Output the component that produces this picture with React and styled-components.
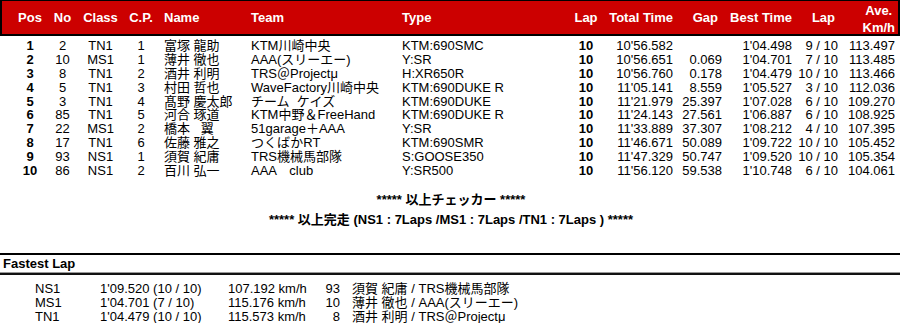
import React from 'react';
import styled, {createGlobalStyle} from 'styled-components';

const GlobalStyle = createGlobalStyle`
	html, body {
		margin: 0;
		padding: 0;
		background: #fff;
	}
	body {
		font-family: "Liberation Sans", Arial, "Noto Sans CJK JP", sans-serif;
		font-size: 13px;
		color: #000;
	}
`;

const COLS = '48px 29px 47px 34px 93px 151px 168px 32px 71px 49px 70px 46px 57px';

const results = [
	['1', '2', 'TN1', '1', '富塚 龍助', 'KTM川崎中央', 'KTM:690SMC', '10', "10'56.582", '', "1'04.498", '9 / 10', '113.497'],
	['2', '10', 'MS1', '1', '薄井 徹也', 'AAA(スリーエー)', 'Y:SR', '10', "10'56.651", '0.069', "1'04.701", '7 / 10', '113.485'],
	['3', '8', 'TN1', '2', '酒井 利明', 'TRS＠Projectμ', 'H:XR650R', '10', "10'56.760", '0.178', "1'04.479", '10 / 10', '113.466'],
	['4', '5', 'TN1', '3', '村田 哲也', 'WaveFactory川崎中央', 'KTM:690DUKE R', '10', "11'05.141", '8.559', "1'05.527", '3 / 10', '112.036'],
	['5', '3', 'TN1', '4', '髙野 慶太郎', 'チーム  ケイズ', 'KTM:690DUKE', '10', "11'21.979", '25.397', "1'07.028", '6 / 10', '109.270'],
	['6', '85', 'TN1', '5', '河合 琢道', 'KTM中野＆FreeHand', 'KTM:690DUKE R', '10', "11'24.143", '27.561', "1'06.887", '6 / 10', '108.925'],
	['7', '22', 'MS1', '2', '橋本   翼', '51garage＋AAA', 'Y:SR', '10', "11'33.889", '37.307', "1'08.212", '4 / 10', '107.395'],
	['8', '17', 'TN1', '6', '佐藤 雅之', 'つくばかRT', 'KTM:690SMR', '10', "11'46.671", '50.089', "1'09.722", '10 / 10', '105.452'],
	['9', '93', 'NS1', '1', '須賀 紀庸', 'TRS機械馬部隊', 'S:GOOSE350', '10', "11'47.329", '50.747', "1'09.520", '10 / 10', '105.354'],
	['10', '86', 'NS1', '2', '百川 弘一', 'AAA　club', 'Y:SR500', '10', "11'56.120", '59.538', "1'10.748", '6 / 10', '104.061'],
];

const fastest = [
	['NS1', "1'09.520 (10 / 10)", '107.192 km/h', '93', '須賀 紀庸', 'TRS機械馬部隊'],
	['MS1', "1'04.701 (7 / 10)", '115.176 km/h', '10', '薄井 徹也', 'AAA(スリーエー)'],
	['TN1', "1'04.479 (10 / 10)", '115.573 km/h', '8', '酒井 利明', 'TRS＠Projectμ'],
];

// how each result column lines up: [align, padLeft, padRight, bold]
const colSpec = [
	['center', 12, 0, true],
	['center', 0, 0],
	['center', 0, 0],
	['center', 0, 0],
	['left', 6, 0],
	['left', 0, 0],
	['left', 0, 0],
	['center', 0, 0, true],
	['right', 0, 0],
	['right', 0, 0],
	['right', 0, 0],
	['right', 0, 0],
	['right', 0, 0],
];

export default function App() {
	return (
		<Page>
			<GlobalStyle/>
			<HeaderBar>
				<HeadCell $align="center" $pl={12}>Pos</HeadCell>
				<HeadCell $align="center">No</HeadCell>
				<HeadCell $align="center">Class</HeadCell>
				<HeadCell $align="center">C.P.</HeadCell>
				<HeadCell $pl={6}>Name</HeadCell>
				<HeadCell>Team</HeadCell>
				<HeadCell>Type</HeadCell>
				<HeadCell $align="center">Lap</HeadCell>
				<HeadCell $align="right">Total Time</HeadCell>
				<HeadCell $align="right" $pr={4}>Gap</HeadCell>
				<HeadCell $align="right">Best Time</HeadCell>
				<HeadCell $align="right" $pr={3}>Lap</HeadCell>
				<HeadCell $align="right">
					<Stacked>Ave.<br/>Km/h</Stacked>
				</HeadCell>
			</HeaderBar>

			<Body>
				{results.map((row) => (
					<Row key={row[0]}>
						{row.map((val, i) => {
							const [align, pl, pr, bold] = colSpec[i];
							return (
								<Cell key={i} $align={align} $pl={pl} $pr={pr} $bold={bold}>
									{val}
								</Cell>
							);
						})}
					</Row>
				))}
			</Body>

			<Notice $top={12}>***** 以上チェッカー *****</Notice>
			<Notice>***** 以上完走 (NS1 : 7Laps /MS1 : 7Laps /TN1 : 7Laps ) *****</Notice>

			<FastestSection>
				<FastestTitle>Fastest Lap</FastestTitle>
				<FastestList>
					{fastest.map((f) => (
						<FastestRow key={f[0]}>
							<span>{f[0]}</span>
							<span>{f[1]}</span>
							<span>{f[2]}</span>
							<FastNo>{f[3]}</FastNo>
							<FastName>{f[4]} / {f[5]}</FastName>
						</FastestRow>
					))}
				</FastestList>
			</FastestSection>
		</Page>
	);
}

const Page = styled.div`
	width: 900px;
	height: 323px;
	overflow: hidden;
	background: #fff;
`;

const HeaderBar = styled.div`
	display: grid;
	grid-template-columns: ${COLS};
	align-items: center;
	height: 36px;
	background: #cc0000;
	box-shadow: inset 2px 1px 0 #000, inset -2px -2px 0 #000;
	color: #fff;
	font-weight: bold;
`;

const HeadCell = styled.div`
	text-align: ${(p) => p.$align || 'left'};
	padding-left: ${(p) => p.$pl || 0}px;
	padding-right: ${(p) => p.$pr || 0}px;
	white-space: nowrap;
	line-height: 16px;
`;

const Stacked = styled.span`
	display: inline-block;
	text-align: center;
	line-height: 17px;
	margin-top: 1px;
`;

const Body = styled.div`
	padding-top: 3px;
`;

const Row = styled.div`
	display: grid;
	grid-template-columns: ${COLS};
	height: 13.9px;
	line-height: 13.9px;
`;

const Cell = styled.div`
	text-align: ${(p) => p.$align};
	padding-left: ${(p) => p.$pl}px;
	padding-right: ${(p) => p.$pr}px;
	font-weight: ${(p) => (p.$bold ? 'bold' : 'normal')};
	white-space: pre;
`;

const Notice = styled.div`
	margin-top: ${(p) => p.$top || 0}px;
	height: 20px;
	line-height: 20px;
	text-align: center;
	font-weight: bold;
	padding-left: 2px;
`;

const FastestSection = styled.section`
	margin-top: 23px;
`;

const FastestTitle = styled.div`
	border-top: 2px solid #000;
	border-bottom: 2px solid #111;
	box-shadow: 0 -1px 0 #999 inset;
	height: 18px;
	line-height: 18px;
	padding-left: 3px;
	font-weight: bold;
`;

const FastestList = styled.div`
	padding-top: 7px;
`;

const FastestRow = styled.div`
	display: grid;
	grid-template-columns: 35px 65px 128px 92px 20px auto;
	height: 14px;
	line-height: 14px;
	white-space: pre;
	& > span:first-child {
		grid-column: 2;
	}
`;

const FastNo = styled.span`
	text-align: right;
`;

const FastName = styled.span`
	padding-left: 12px;
`;
